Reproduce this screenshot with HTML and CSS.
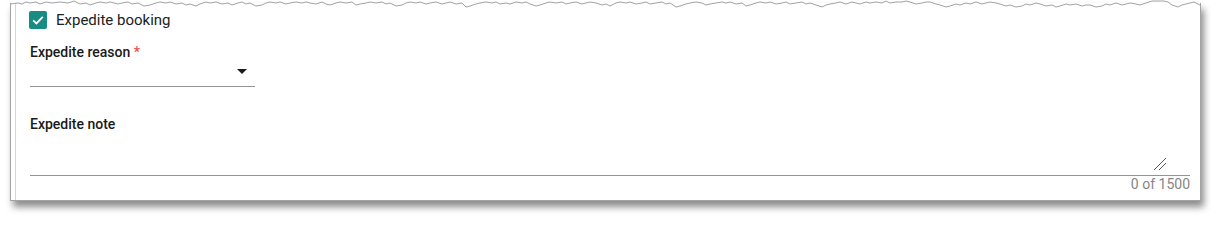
FILE: index.html
```html
<!DOCTYPE html>
<html>
<head>
<meta charset="utf-8">
<link rel="stylesheet" href="styles.css">
</head>
<body>
<div class="panel">
  <svg class="torn" width="1192" height="12" viewBox="0 0 1192 12">
    <polyline fill="none" stroke="#a3a3a3" stroke-width="1" points="0,4 8,3 12,4 16,2 20,3 26,2 30,4 36,2 42,3 50,2 58,3 64,1 70,4 76,3 80,5 86,3 90,2 96,3 100,2 108,4 112,3 118,2 122,4 128,3 134,6 140,5 146,3 150,2 156,3 160,2 166,4 172,3 176,5 180,4 186,6 190,4 196,2 200,3 206,2 212,4 218,3 222,5 228,3 232,2 236,4 240,3 246,6 252,5 256,3 260,2 266,3 270,2 276,4 280,3 286,2 292,3 296,2 300,3 306,4 312,2 316,4 320,5 326,3 330,2 336,3 342,2 346,5 350,4 356,3 360,2 366,3 372,2 376,4 380,3 386,6 392,5 396,3 400,2 406,3 410,2 416,4 420,3 426,2 432,4 436,3 440,2 446,4 452,3 456,7 460,6 466,4 470,3 476,2 482,3 486,2 490,4 496,3 500,4 506,2 512,3 516,2 520,4 526,6 530,5 536,3 540,2 546,3 552,2 556,4 560,3 566,2 572,4 576,3 580,2 586,3 592,5 596,4 600,6 606,3 610,2 616,3 620,2 626,4 632,3 636,2 640,4 646,3 652,2 656,4 660,3 666,7 670,6 676,4 680,3 686,2 692,3 696,5 700,4 706,3 712,2 716,3 720,2 726,4 732,3 736,6 740,5 746,3 750,2 756,3 760,2 766,4 772,3 776,2 780,4 786,3 792,2 796,4 800,3 806,5 812,7 816,5 820,4 826,3 830,2 836,4 842,2 846,3 850,4 856,2 860,3 866,2 872,3 876,1 880,3 886,2 892,2 896,1 900,2 906,4 912,3 916,2 920,2 926,4 930,5 936,7 940,6 946,4 950,5 956,3 960,4 966,2 972,4 976,3 980,2 986,3 990,4 996,6 1000,5 1006,7 1012,6 1016,4 1020,5 1026,3 1030,4 1036,6 1042,5 1046,7 1050,6 1056,4 1060,5 1066,4 1072,6 1076,5 1080,5 1086,7 1092,6 1096,4 1100,5 1106,3 1112,5 1116,4 1120,3 1126,4 1130,5 1136,3 1142,1 1148,1 1154,1 1158,2 1162,5 1168,7 1172,5 1176,4 1180,3 1184,2 1188,4 1190,5"/>
  </svg>
  <div class="inner">
    <label class="check-row">
      <span class="checkbox">
        <svg width="18" height="18" viewBox="0 0 18 18"><path d="M4.2 9.3 L7.4 12.4 L13.8 5.9" fill="none" stroke="#fff" stroke-width="1.8"/></svg>
      </span>
      <span class="check-text">Expedite booking</span>
    </label>

    <div class="field-label">Expedite reason <span class="req">*</span></div>
    <div class="select">
      <span class="arrow"></span>
    </div>

    <div class="field-label note-label">Expedite note</div>
    <div class="textarea-wrap">
      <textarea class="note"></textarea>
      <svg class="resize" width="14" height="14" viewBox="0 0 14 14">
        <path d="M1 13 L13 1 M6 13 L13 6" stroke="#555" stroke-width="1" fill="none"/>
      </svg>
    </div>
    <div class="counter">0 of 1500</div>
  </div>
</div>
</body>
</html>
```

FILE: styles.css
```css
html, body {
  margin: 0;
  padding: 0;
  background: #ffffff;
}

body {
  font-family: Roboto, "Liberation Sans", Arial, sans-serif;
  color: #212121;
  width: 1211px;
  height: 222px;
  overflow: hidden;
}

.panel {
  position: relative;
  margin-top: 3px;
  margin-left: 10px;
  width: 1191px;
  height: 198px;
  box-sizing: border-box;
  border: 1px solid #a3a3a3;
  border-top: none;
  background: #ffffff;
  box-shadow: 3px 6px 7px rgba(0, 0, 0, 0.45);
}

.torn {
  position: absolute;
  top: -3px;
  left: -1px;
  display: block;
}

.inner {
  margin-left: 4px;
  height: 100%;
  box-sizing: border-box;
  border-left: 1px solid #d6d6d6;
  padding: 8px 10px 0 14px;
}

.check-row {
  display: flex;
  align-items: center;
  height: 18px;
  gap: 9px;
}

.checkbox {
  width: 18px;
  height: 18px;
  margin-left: -1px;
  border-radius: 2px;
  background: #178c83;
  display: flex;
}

.checkbox svg {
  display: block;
}

.check-text {
  font-size: 15px;
  line-height: 17px;
  color: #212121;
}

.field-label {
  font-size: 14px;
  line-height: 16px;
  font-weight: 500;
  color: #1a1a1a;
  margin-top: 15px;
}

.req {
  color: #f0504a;
}

.select {
  width: 225px;
  height: 27px;
  box-sizing: border-box;
  border-bottom: 1px solid #949494;
  display: flex;
  justify-content: flex-end;
  align-items: flex-start;
  padding-top: 9px;
  padding-right: 8px;
}

.arrow {
  width: 0;
  height: 0;
  border-left: 5px solid transparent;
  border-right: 5px solid transparent;
  border-top: 5px solid #1a1a1a;
}

.note-label {
  margin-top: 29px;
}

.textarea-wrap {
  position: relative;
  height: 44px;
  box-sizing: border-box;
  border-bottom: 1px solid #949494;
}

.note {
  display: block;
  width: 100%;
  height: 43px;
  border: none;
  outline: none;
  resize: none;
  padding: 0;
  margin: 0;
  background: transparent;
  font-family: inherit;
}

.resize {
  position: absolute;
  right: 23px;
  bottom: 4px;
  display: block;
}

.counter {
  text-align: right;
  font-size: 14px;
  line-height: 16px;
  color: #858585;
  margin-top: 0;
}
```
